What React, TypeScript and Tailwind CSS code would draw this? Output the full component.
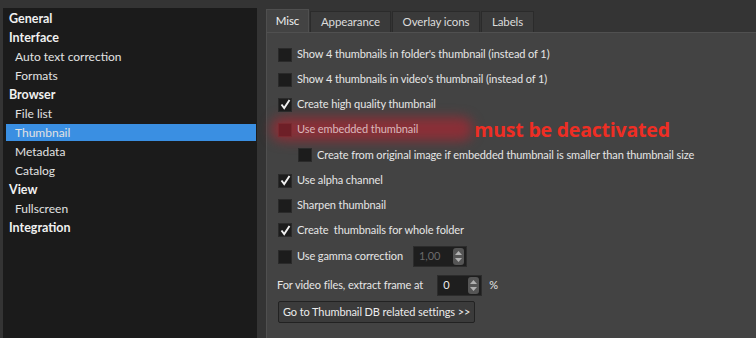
import React from "react"

const FONT = { fontFamily: "Lato, 'Open Sans', sans-serif" }

const tree: { label: string; level: 0 | 1; selected?: boolean }[] = [
  { label: "General", level: 0 },
  { label: "Interface", level: 0 },
  { label: "Auto text correction", level: 1 },
  { label: "Formats", level: 1 },
  { label: "Browser", level: 0 },
  { label: "File list", level: 1 },
  { label: "Thumbnail", level: 1, selected: true },
  { label: "Metadata", level: 1 },
  { label: "Catalog", level: 1 },
  { label: "View", level: 0 },
  { label: "Fullscreen", level: 1 },
  { label: "Integration", level: 0 },
]

function Check({ on, tint }: { on?: boolean; tint?: boolean }) {
  return (
    <div
      className={`w-[14px] h-[14px] shrink-0 flex items-center justify-center border ${
        tint ? "bg-[#6e1f27] border-[#7a2a30]" : "bg-[#1c1c1c] border-[#2a2a2a]"
      }`}
    >
      {on && (
        <svg width="11" height="11" viewBox="0 0 11 11">
          <path d="M1.5 5.5 L4.2 9 L9.5 1" fill="none" stroke="#f2f2f2" strokeWidth="1.9" />
        </svg>
      )}
    </div>
  )
}

function Spin({ value, disabled, w }: { value: string; disabled?: boolean; w: string }) {
  return (
    <div className={`${w} h-[21px] bg-[#1e1e1e] border border-[#2c2c2c] flex items-center justify-between pl-[5px] pr-[2px]`}>
      <span className={disabled ? "text-[#6a6a6a]" : "text-[#ececec]"}>{value}</span>
      <div className="w-[11px] h-[17px] rounded-[3px] bg-[#555] flex flex-col items-center justify-center gap-[3px]">
        <svg width="7" height="4" viewBox="0 0 7 4">
          <path d="M0 4 L3.5 0 L7 4 Z" fill="#b0b0b0" />
        </svg>
        <svg width="7" height="4" viewBox="0 0 7 4">
          <path d="M0 0 L3.5 4 L7 0 Z" fill="#b0b0b0" />
        </svg>
      </div>
    </div>
  )
}

function Row({ h, children, indent }: { h: string; children: React.ReactNode; indent?: boolean }) {
  return <div className={`${h} flex items-center gap-[5px] ${indent ? "pl-[20px]" : ""}`}>{children}</div>
}

export default function App() {
  const tabs = [
    { label: "Misc", w: "w-[43px]", active: true },
    { label: "Appearance", w: "w-[81px]" },
    { label: "Overlay icons", w: "w-[88px]" },
    { label: "Labels", w: "w-[53px]" },
  ]

  return (
    <div
      className="w-[756px] h-[338px] bg-[#343434] flex pt-[8px] pl-[3px] overflow-hidden text-[12px] text-[#e6e6e6]"
      style={FONT}
    >
      {/* Tree */}
      <div className="w-[254px] shrink-0 bg-[#1b1b1b] pt-[1px]">
        {tree.map((t) => (
          <div key={t.label} className="h-[19px] flex items-center">
            <div
              className={`flex-1 h-[17px] flex items-center ml-[3px] mr-[1px] pt-[1px] ${
                t.level === 0 ? "pl-[3px] font-bold text-[12.5px] text-[#f0f0f0]" : "pl-[9px] text-[#e2e2e2]"
              } ${t.selected ? "bg-[#3a8fe2] text-[#1c3a66]" : ""}`}
            >
              {t.label}
            </div>
          </div>
        ))}
      </div>

      {/* Right side */}
      <div className="flex-1 flex flex-col ml-[9px] text-[11px] tracking-[-0.1px]">
        <div className="h-[24px] flex items-end gap-[1px] text-[11.5px]">
          {tabs.map((t) => (
            <div
              key={t.label}
              className={`${t.w} flex items-center justify-center border border-b-0 ${
                t.active
                  ? "h-[23px] bg-[#434343] border-[#4f4f4f] text-[#f0f0f0]"
                  : "h-[21px] bg-[#3a3a3a] border-[#2b2b2b] text-[#dcdcdc]"
              }`}
            >
              {t.label}
            </div>
          ))}
        </div>

        <div className="relative flex-1 bg-[#434343] border-t border-l border-[#505050] pt-[9px] pl-[11px]">
          {/* red highlight around the embedded thumbnail option */}
          <div className="absolute left-[4px] top-[84px] w-[202px] h-[24px] rounded-full bg-[#a82632]/70 blur-[6px]" />

          <div className="relative">
            <Row h="h-[25px]">
              <Check />
              <span>Show 4 thumbnails in folder's thumbnail (instead of 1)</span>
            </Row>
            <Row h="h-[25px]">
              <Check />
              <span>Show 4 thumbnails in video's thumbnail (instead of 1)</span>
            </Row>
            <Row h="h-[25px]">
              <Check on />
              <span>Create high quality thumbnail</span>
            </Row>
            <Row h="h-[25px]">
              <Check tint />
              <span className="text-[#d9b9bc]">Use embedded thumbnail</span>
              <span
                className="ml-[51px] text-[19.5px] font-bold text-[#ee2e24] tracking-[-0.2px]"
                style={{ fontFamily: "'Open Sans', sans-serif" }}
              >
                must be deactivated
              </span>
            </Row>
            <Row h="h-[26px]" indent>
              <Check />
              <span>Create from original image if embedded thumbnail is smaller than thumbnail size</span>
            </Row>
            <Row h="h-[25px]">
              <Check on />
              <span>Use alpha channel</span>
            </Row>
            <Row h="h-[25px]">
              <Check />
              <span>Sharpen thumbnail</span>
            </Row>
            <Row h="h-[24px]">
              <Check on />
              <span>Create&nbsp; thumbnails for whole folder</span>
            </Row>
            <Row h="h-[29px]">
              <Check />
              <span>Use gamma correction</span>
              <div className="ml-[5px]">
                <Spin value="1,00" disabled w="w-[54px]" />
              </div>
            </Row>
            <div className="h-[28px] flex items-center -ml-[1px]">
              <span>For video files, extract frame at</span>
              <div className="ml-[14px]">
                <Spin value="0" w="w-[45px]" />
              </div>
              <span className="ml-[7px]">%</span>
            </div>
            <div className="h-[26px] flex items-center">
              <div className="h-[22px] px-[4px] flex items-center bg-[#3b3b3b] border border-[#222] rounded-[2px] text-[#ececec] text-[11px]">
                Go to Thumbnail DB related settings &gt;&gt;
              </div>
            </div>
          </div>
        </div>
      </div>
    </div>
  )
}
